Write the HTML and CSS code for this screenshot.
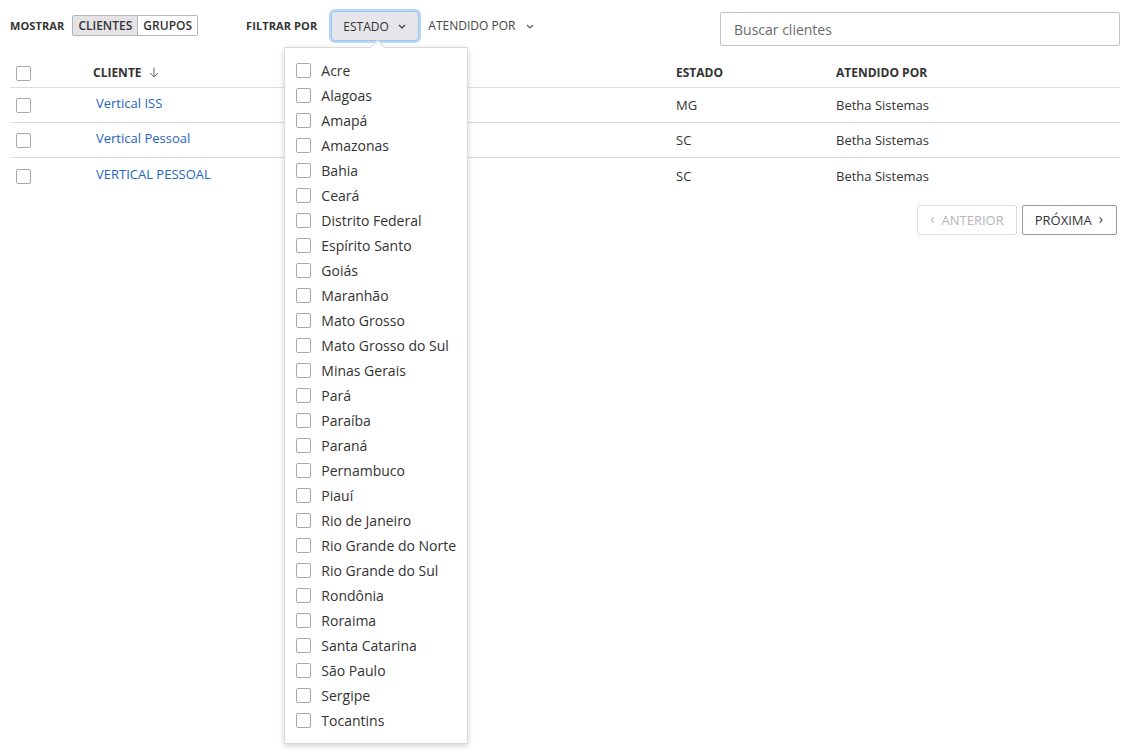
FILE: index.html
```html
<!DOCTYPE html>
<html lang="pt-BR">
<head>
<meta charset="utf-8">
<title>Clientes</title>
<link rel="stylesheet" href="styles.css">
</head>
<body>
<div class="page">
  <div class="toolbar">
    <div class="group">
      <span class="label">MOSTRAR</span>
      <div class="segmented">
        <button class="seg active">CLIENTES</button>
        <button class="seg">GRUPOS</button>
      </div>
    </div>
    <div class="group filters">
      <span class="label">FILTRAR POR</span>
      <div class="filter-wrap">
        <button class="filter open">ESTADO <svg class="caret" viewBox="0 0 8 5" width="8" height="5"><path d="M1 1 L4 4 L7 1" fill="none" stroke="#333" stroke-width="1.1"/></svg></button>
        <div class="popover">
          <ul class="options">
            <li><span class="cb"></span>Acre</li>
            <li><span class="cb"></span>Alagoas</li>
            <li><span class="cb"></span>Amapá</li>
            <li><span class="cb"></span>Amazonas</li>
            <li><span class="cb"></span>Bahia</li>
            <li><span class="cb"></span>Ceará</li>
            <li><span class="cb"></span>Distrito Federal</li>
            <li><span class="cb"></span>Espírito Santo</li>
            <li><span class="cb"></span>Goiás</li>
            <li><span class="cb"></span>Maranhão</li>
            <li><span class="cb"></span>Mato Grosso</li>
            <li><span class="cb"></span>Mato Grosso do Sul</li>
            <li><span class="cb"></span>Minas Gerais</li>
            <li><span class="cb"></span>Pará</li>
            <li><span class="cb"></span>Paraíba</li>
            <li><span class="cb"></span>Paraná</li>
            <li><span class="cb"></span>Pernambuco</li>
            <li><span class="cb"></span>Piauí</li>
            <li><span class="cb"></span>Rio de Janeiro</li>
            <li><span class="cb"></span>Rio Grande do Norte</li>
            <li><span class="cb"></span>Rio Grande do Sul</li>
            <li><span class="cb"></span>Rondônia</li>
            <li><span class="cb"></span>Roraima</li>
            <li><span class="cb"></span>Santa Catarina</li>
            <li><span class="cb"></span>São Paulo</li>
            <li><span class="cb"></span>Sergipe</li>
            <li><span class="cb"></span>Tocantins</li>
          </ul>
        </div>
      </div>
      <button class="filter">ATENDIDO POR <svg class="caret" viewBox="0 0 8 5" width="8" height="5"><path d="M1 1 L4 4 L7 1" fill="none" stroke="#555" stroke-width="1.1"/></svg></button>
    </div>
    <div class="search"><input type="text" placeholder="Buscar clientes"></div>
  </div>

  <div class="table">
    <div class="row head">
      <div class="c-check"><span class="cb"></span></div>
      <div class="c-name">CLIENTE <svg class="sort" viewBox="0 0 10 11" width="10" height="11"><path d="M5 0.5 V10 M1 6 L5 10 L9 6" fill="none" stroke="#666" stroke-width="1"/></svg></div>
      <div class="c-uf">ESTADO</div>
      <div class="c-by">ATENDIDO POR</div>
    </div>
    <div class="row">
      <div class="c-check"><span class="cb"></span></div>
      <div class="c-name"><a href="#">Vertical ISS</a></div>
      <div class="c-uf">MG</div>
      <div class="c-by">Betha Sistemas</div>
    </div>
    <div class="row">
      <div class="c-check"><span class="cb"></span></div>
      <div class="c-name"><a href="#">Vertical Pessoal</a></div>
      <div class="c-uf">SC</div>
      <div class="c-by">Betha Sistemas</div>
    </div>
    <div class="row last">
      <div class="c-check"><span class="cb"></span></div>
      <div class="c-name"><a href="#">VERTICAL PESSOAL</a></div>
      <div class="c-uf">SC</div>
      <div class="c-by">Betha Sistemas</div>
    </div>
  </div>

  <div class="pager">
    <button class="pg disabled"><span class="chev">‹</span> ANTERIOR</button>
    <button class="pg">PRÓXIMA <span class="chev">›</span></button>
  </div>
</div>
</body>
</html>
```
FILE: styles.css
```css
* { box-sizing: border-box; }
html, body { margin: 0; background: #fff; }
body {
  font-family: "Open Sans", "Noto Sans", sans-serif;
  color: #333;
  font-size: 13px;
}
button { font-family: inherit; }

.page { padding: 10px 12px 0 10px; min-height: 755px; }

.toolbar {
  display: flex;
  align-items: flex-start;
  height: 49px;
}
.group {
  display: flex;
  align-items: center;
  height: 31px;
}
.label {
  font-size: 11px;
  font-weight: 700;
  color: #333;
  letter-spacing: 0.1px;
}
.segmented {
  display: flex;
  margin-left: 8px;
  border: 1px solid #b5b5b5;
  border-radius: 2px;
  height: 21px;
  margin-top: -1px;
}
.seg {
  border: 0;
  background: #fff;
  font-size: 12px;
  font-weight: 600;
  color: #333;
  padding: 0 5px;
  height: 19px;
  line-height: 19px;
}
.seg.active {
  background: #e4e4e7;
  border-right: 1px solid #b5b5b5;
}
.filters { margin-left: 48px; }
.filter-wrap { position: relative; margin-left: 14px; margin-top: 1px; }
.filter {
  display: flex;
  align-items: center;
  gap: 9px;
  border: 0;
  background: transparent;
  font-size: 12px;
  color: #333;
  height: 30px;
  padding: 0 9px;
  border-radius: 4px;
}
.filter.open {
  background: #e6e6ea;
  box-shadow: 0 0 0 2px #b9d7f7;
  border: 1px solid #9ec5f0;
  padding: 0 10px 0 11px;
  width: 88px;
}
.filter .caret { margin-top: 1px; }
.filters > .filter { color: #444; padding-left: 9px; gap: 11px; }

.popover {
  position: absolute;
  top: 36px;
  left: -47px;
  width: 184px;
  background: #fff;
  border: 1px solid #dadada;
  box-shadow: 0 2px 6px rgba(0,0,0,0.18);
  z-index: 10;
  padding: 10px 0 10px;
}
.popover::before {
  content: "";
  position: absolute;
  top: -6px;
  left: 87px;
  width: 10px;
  height: 10px;
  background: #fff;
  border-left: 1px solid #dadada;
  border-top: 1px solid #dadada;
  transform: rotate(45deg);
}
.options { list-style: none; margin: 0; padding: 0; position: relative; }
.options li {
  display: flex;
  align-items: center;
  height: 25px;
  padding-left: 11px;
  font-size: 14px;
  color: #333;
}
.options li .cb { margin-right: 10px; }

.cb {
  display: inline-block;
  width: 15px;
  height: 15px;
  border: 1.5px solid #a9a9a9;
  border-radius: 2px;
  background: #fff;
  flex: none;
}

.search { margin-left: auto; margin-top: 2px; }
.search input {
  width: 400px;
  height: 34px;
  border: 1px solid #c4c4c4;
  border-radius: 2px;
  padding: 0 13px;
  font-family: inherit;
  font-size: 14px;
  color: #333;
  outline: none;
}
.search input::placeholder { color: #6a6a6a; }

.row {
  display: flex;
  align-items: center;
  height: 35px;
  border-bottom: 1px solid #dcdcdc;
  font-size: 13px;
}
.row.head {
  height: 29px;
  font-size: 12px;
  font-weight: 700;
  color: #333;
  padding-bottom: 2px;
}
.row.head .c-check { margin-top: 2px; }
.row.last { border-bottom: 0; }
.c-check { width: 83px; padding-left: 6px; display: flex; }
.row:not(.head) .c-check { margin-top: 1px; }
.c-name { width: 583px; display: flex; align-items: center; gap: 7px; }
.row:not(.head) .c-name { padding-left: 3px; margin-top: -4px; }
.c-uf { width: 160px; }
.c-by { flex: 1; }
.row.head .c-uf, .row.head .c-by { padding-top: 1px; }
a { color: #2565be; text-decoration: none; }

.pager {
  display: flex;
  justify-content: flex-end;
  gap: 5px;
  margin-top: 12px;
  margin-right: 3px;
}
.pg {
  height: 30px;
  border: 1px solid #9a9a9a;
  border-radius: 2px;
  background: #fff;
  font-size: 13px;
  color: #333;
  padding: 0 13px 0 12px;
  display: flex;
  align-items: center;
  gap: 7px;
}
.pg.disabled { border-color: #dedede; color: #b5b5b5; padding: 0 12px 0 12px; }
.chev { font-size: 14px; line-height: 1; margin-top: -2px; }
```
